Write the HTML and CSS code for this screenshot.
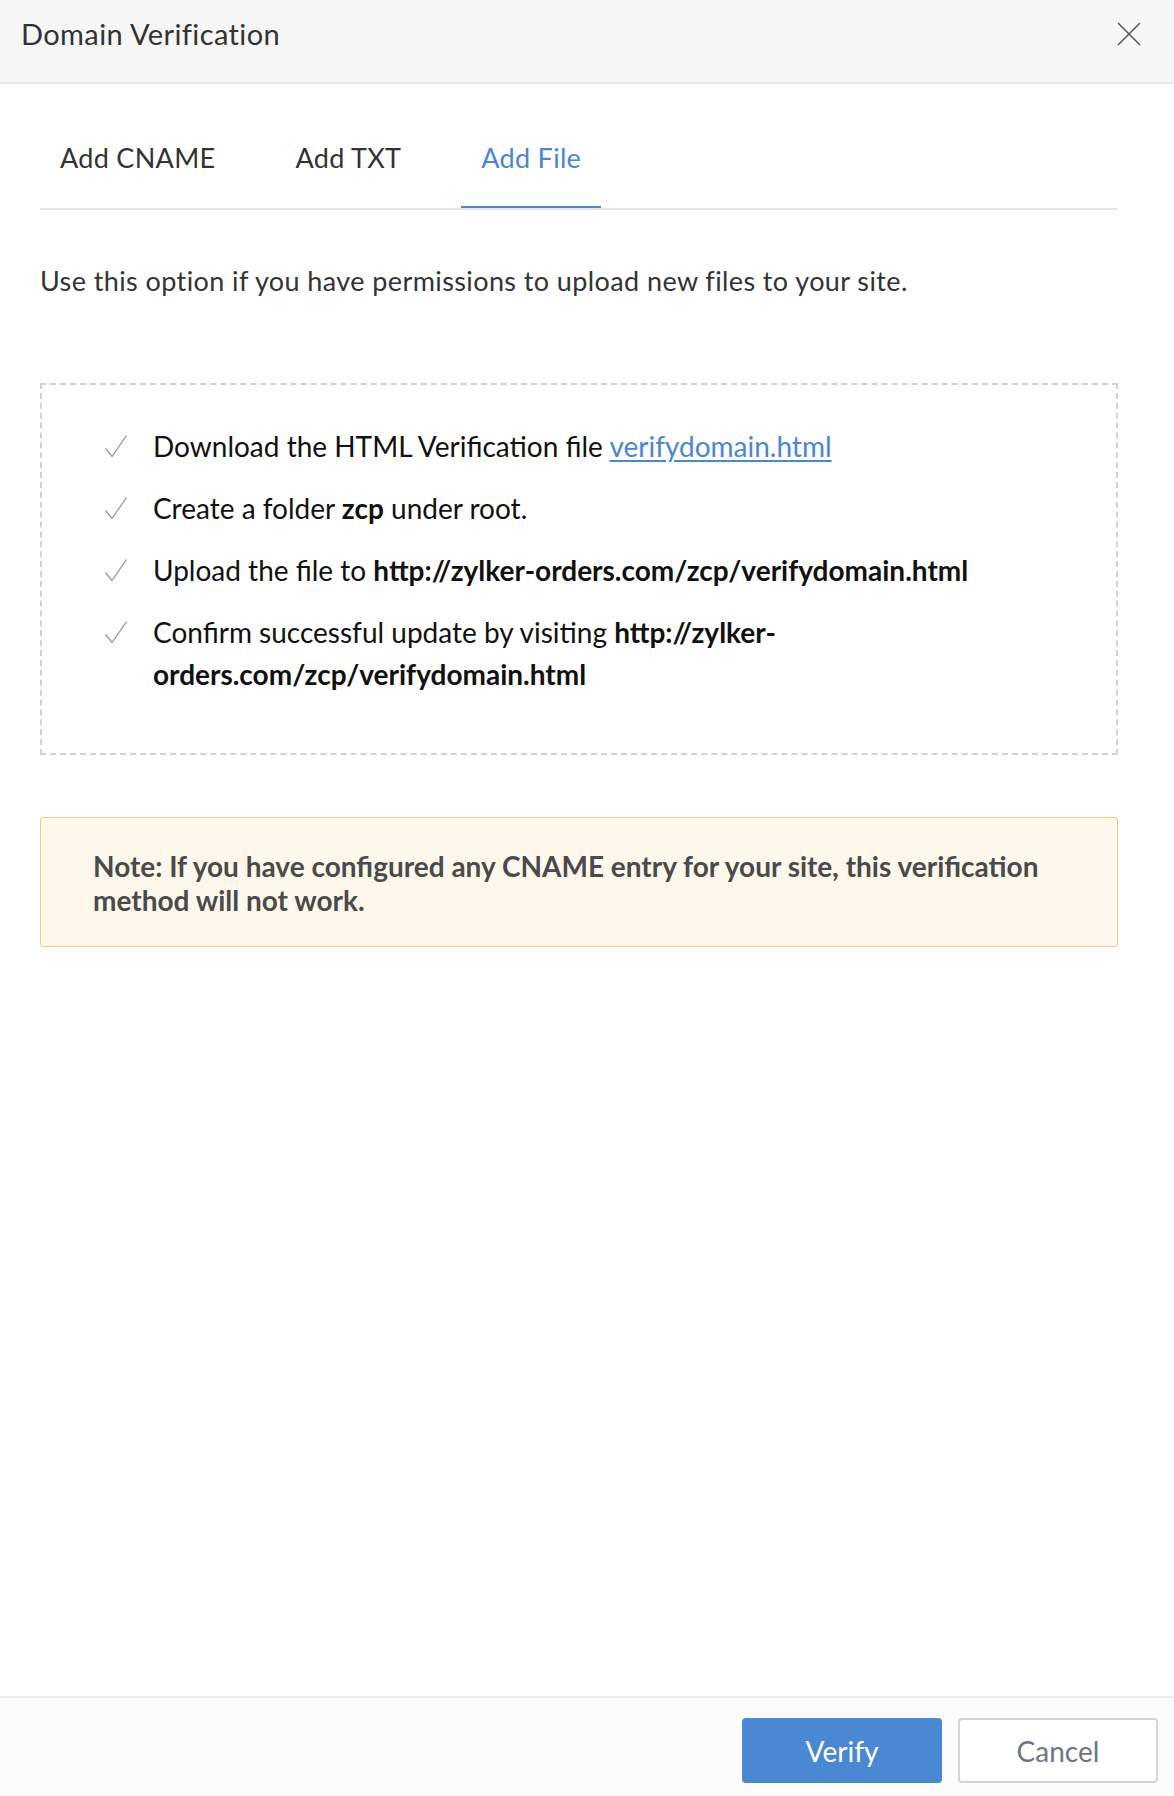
FILE: index.html
```html
<!DOCTYPE html>
<html lang="en">
<head>
<meta charset="utf-8">
<title>Domain Verification</title>
<link rel="stylesheet" href="styles.css">
</head>
<body>
<div class="dialog">
  <header class="dlg-header">
    <h1 class="dlg-title">Domain Verification</h1>
    <button class="dlg-close" aria-label="Close">
      <svg width="24" height="24" viewBox="0 0 24 24"><path d="M1 1 L23 23 M23 1 L1 23" stroke="#5a5a5a" stroke-width="1.6" fill="none"/></svg>
    </button>
  </header>
  <main class="dlg-body">
    <nav class="tabs">
      <div class="tab">Add CNAME</div>
      <div class="tab">Add TXT</div>
      <div class="tab active">Add File</div>
    </nav>
    <p class="desc">Use this option if you have permissions to upload new files to your site.</p>
    <div class="steps-box">
      <ul class="steps">
        <li><span class="check"></span><span class="step-text">Download the HTML Verification file <a href="#">verifydomain.html</a></span></li>
        <li><span class="check"></span><span class="step-text">Create a folder <b>zcp</b> under root.</span></li>
        <li><span class="check"></span><span class="step-text">Upload the file to <b>http://zylker-orders.com/zcp/verifydomain.html</b></span></li>
        <li><span class="check"></span><span class="step-text">Confirm successful update by visiting <b>http://zylker-orders.com/zcp/verifydomain.html</b></span></li>
      </ul>
    </div>
    <div class="note">Note: If you have configured any CNAME entry for your site, this verification method will not work.</div>
  </main>
  <footer class="dlg-footer">
    <button class="btn btn-primary">Verify</button>
    <button class="btn btn-secondary">Cancel</button>
  </footer>
</div>
</body>
</html>
```
FILE: styles.css
```css
* { box-sizing: border-box; }
html, body { margin: 0; padding: 0; background: #fff; }
body { font-family: Lato, "Open Sans", sans-serif; color: #333; }

.dialog {
  width: 1174px;
  height: 1796px;
  display: flex;
  flex-direction: column;
}

.dlg-header {
  height: 84px;
  background: #f6f6f6;
  border-bottom: 2px solid #e3e7eb;
  display: flex;
  align-items: flex-start;
  justify-content: space-between;
  padding: 17px 33px 0 21px;
}
.dlg-title {
  margin: 0;
  font-size: 29px;
  line-height: 34px;
  font-weight: 400;
  color: #333;
  letter-spacing: 0.4px;
}
.dlg-close {
  border: 0;
  background: transparent;
  padding: 0;
  margin-top: 5px;
  width: 24px;
  height: 24px;
  display: flex;
}

.dlg-body {
  flex: 1;
  padding: 24px 56px 0 40px;
}

.tabs {
  display: flex;
  gap: 40px;
  border-bottom: 2px solid #e4e8ec;
}
.tab {
  padding: 35px 20px 33px;
  line-height: 30px;
  font-size: 27px;
  color: #333;
  letter-spacing: 0.3px;
  border-bottom: 2px solid transparent;
}
.tab.active {
  color: #4a86d4;
  border-bottom-color: #4a86d4;
}

.desc {
  margin: 56px 0 87px;
  font-size: 27px;
  line-height: 30px;
  color: #333;
  letter-spacing: 0.4px;
}

.steps-box {
  border: 2px dashed #d2d2d2;
}
.steps {
  list-style: none;
  margin: 0;
  padding: 40px 40px 58px 63px;
}
.steps li {
  display: flex;
  gap: 26px;
  font-size: 28px;
  line-height: 42px;
  color: #111;
  margin-bottom: 20px;
}
.steps li:last-child { margin-bottom: 0; }
.check {
  flex: none;
  width: 22px;
  height: 22px;
  margin-top: 10px;
  background: no-repeat center / 22px 22px url("data:image/svg+xml;utf8,<svg xmlns='http://www.w3.org/2000/svg' width='22' height='22' viewBox='0 0 22 22'><path d='M0.5 13.5 L7 21.5 L21.5 0.5' stroke='%23999' stroke-width='1.3' fill='none'/></svg>");
}
.step-text { flex: 1; }
.step-text b { font-weight: 700; }
.step-text a { color: #4a86d4; text-decoration: underline; text-underline-offset: 3px; }

.note {
  margin-top: 62px;
  background: #fef8ec;
  border: 1px solid #ebcb8c;
  border-radius: 3px;
  padding: 31px 52px 29px;
  font-size: 28px;
  line-height: 34px;
  font-weight: 700;
  color: #4a4a4a;
}

.dlg-footer {
  border-top: 2px solid #ebebeb;
  background: #fcfcfc;
  padding: 20px 16px 13px;
  display: flex;
  justify-content: flex-end;
  gap: 16px;
}
.btn {
  width: 200px;
  height: 65px;
  font-family: Lato, "Open Sans", sans-serif;
  font-size: 28px;
  border-radius: 4px;
  cursor: pointer;
}
.btn-primary {
  background: #4a88d4;
  color: #fff;
  border: 0;
}
.btn-secondary {
  background: #fff;
  color: #6b7682;
  border: 2px solid #d4d4d4;
}
```
